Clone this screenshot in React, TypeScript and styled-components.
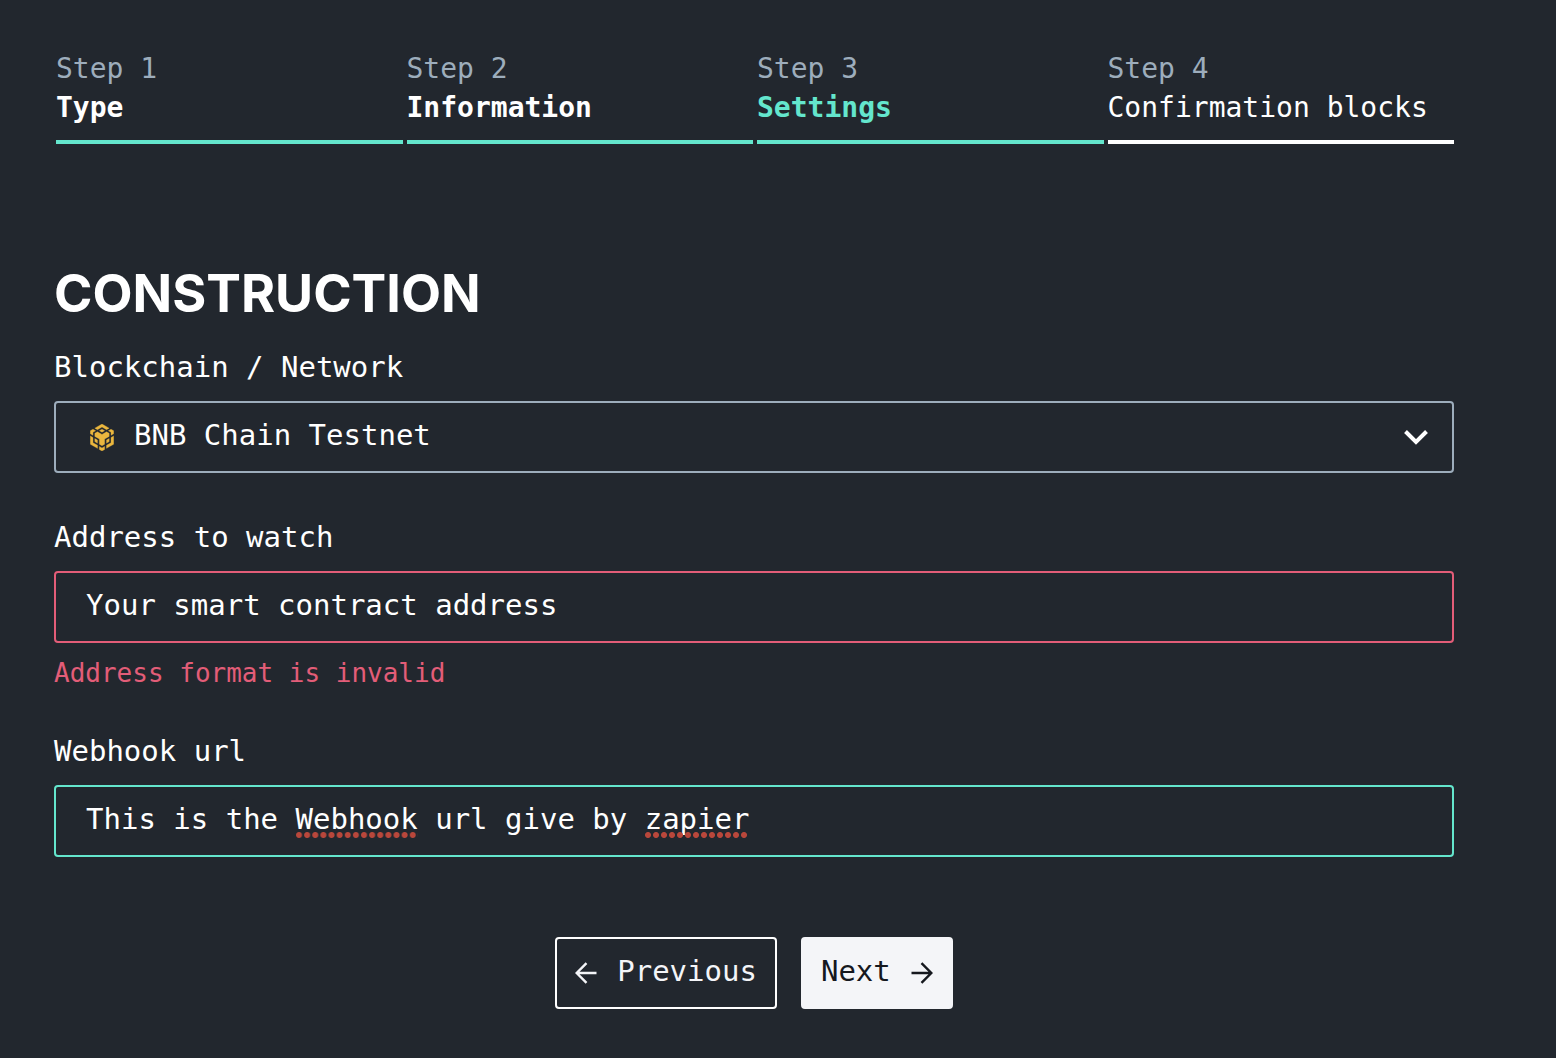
import React, { useId, useState } from "react";
import styled, { createGlobalStyle } from "styled-components";

const colors = {
  background: "#22272e",
  mint: "#64e6cd",
  slate: "#9dadbc",
  rose: "#e35d78",
  white: "#ffffff",
  light: "#f4f5f8",
  ink: "#15181e",
  gold: "#ebb73e",
  spelling: "#b9473b",
};

const mono = `"DejaVu Sans Mono", "Liberation Mono", monospace`;

const GlobalStyle = createGlobalStyle`
  * { box-sizing: border-box; }
  body {
    margin: 0;
    background: ${colors.background};
    color: ${colors.white};
    font-family: ${mono};
  }
`;

const Page = styled.main`
  padding: 49px 102px 48px 54px;
`;

const Stepper = styled.ol`
  display: grid;
  grid-template-columns: repeat(4, 1fr);
  gap: 4px;
  margin: 0;
  padding: 0 0 0 2px;
  list-style: none;
  font-size: 28px;
  line-height: 39px;
`;

type StepState = "done" | "current" | "upcoming";

const StepItem = styled.li<{ $state: StepState }>`
  display: flex;
  flex-direction: column;
  padding-bottom: 13px;
  white-space: nowrap;
  border-bottom: 4px solid
    ${(p) => (p.$state === "upcoming" ? colors.white : colors.mint)};
`;

const StepNumber = styled.span`
  color: ${colors.slate};
`;

const StepName = styled.span<{ $state: StepState }>`
  color: ${(p) => (p.$state === "current" ? colors.mint : colors.white)};
  font-weight: ${(p) => (p.$state === "upcoming" ? 400 : 700)};
`;

const Title = styled.h1`
  margin: 120px 0 24px;
  font-family: Inter, sans-serif;
  font-size: 52px;
  line-height: 60px;
  font-weight: 700;
  text-transform: uppercase;
`;

const Form = styled.form`
  display: flex;
  flex-direction: column;
  gap: 45px;
`;

const Field = styled.div`
  display: flex;
  flex-direction: column;
`;

const Label = styled.label`
  margin-bottom: 14px;
  font-size: 29px;
  line-height: 39px;
`;

const ControlFrame = styled.div`
  position: relative;
  font-size: 29px;
`;

const TextInput = styled.input<{ $tone: string }>`
  display: block;
  width: 100%;
  height: 72px;
  padding: 0 30px 4px;
  border: 2px solid ${(p) => p.$tone};
  border-radius: 4px;
  outline: none;
  background: transparent;
  color: ${colors.white};
  font: 400 29px ${mono};
`;

const Select = styled.select`
  display: block;
  width: 100%;
  height: 72px;
  padding: 0 78px 4px;
  border: 2px solid ${colors.slate};
  border-radius: 4px;
  outline: none;
  appearance: none;
  background: transparent;
  color: ${colors.white};
  font: 400 29px ${mono};

  option {
    background: ${colors.background};
  }
`;

const ControlIcon = styled.span<{ $side: "left" | "right" }>`
  position: absolute;
  top: 0;
  bottom: 0;
  ${(p) => (p.$side === "left" ? "left: 36px;" : "right: 26px;")}
  display: flex;
  align-items: center;
  pointer-events: none;
`;

const SpellingMark = styled.span<{ $start: number; $length: number }>`
  position: absolute;
  top: 47px;
  left: calc(32px + ${(p) => p.$start}ch);
  width: ${(p) => p.$length}ch;
  height: 6px;
  pointer-events: none;
  background: radial-gradient(
      circle at 3px 3px,
      ${colors.spelling} 2.5px,
      transparent 3.5px
    )
    0 0 / 8px 6px round no-repeat;
`;

const ErrorText = styled.p`
  margin: 16px 0 0;
  color: ${colors.rose};
  font-size: 26px;
  line-height: 28px;
`;

const Actions = styled.div`
  display: flex;
  justify-content: center;
  gap: 24px;
  margin-top: 35px;
`;

const Button = styled.button<{ $filled?: boolean }>`
  display: flex;
  align-items: center;
  gap: 20px;
  height: 72px;
  padding: 0 18px;
  border: 2px solid ${(p) => (p.$filled ? colors.light : colors.white)};
  border-radius: 4px;
  background: ${(p) => (p.$filled ? colors.light : "transparent")};
  color: ${(p) => (p.$filled ? colors.ink : colors.light)};
  font: 400 29px ${mono};
  cursor: pointer;
`;

const ButtonText = styled.span`
  padding-bottom: 4px;
`;

function BnbIcon() {
  return (
    <svg width="24" height="27" viewBox="1.5 0 21 24" fill={colors.gold} stroke={colors.gold} strokeWidth="0.3" aria-hidden="true">
      <path d="M5.63 3.68 12 0l6.37 3.68-2.34 1.35L12 2.72 7.97 5.03Z" />
      <path d="m18.37 8.31-2.34-1.36L12 9.27 7.97 6.95 5.63 8.31v2.72l4.03 2.32v4.63L12 19.34l2.34-1.36v-4.63l4.03-2.32Z" />
      <path d="M12 4.6 14.3 5.95 12 7.3 9.7 5.95Z" />
      <path d="M18.37 15.66v-2.71l-2.34 1.35v2.72Z" />
      <path d="M5.63 15.66v-2.71l2.34 1.35v2.72Z" />
      <path d="m20.03 16.62-4.03 2.32v2.72l6.37-3.68v-7.35l-2.34 1.36Z" />
      <path d="M3.97 16.62 8 18.94v2.72l-6.37-3.68v-7.35l2.34 1.36Z" />
      <path d="m17.69 5.99 2.34 1.36v2.72l2.34-1.36V5.99l-2.34-1.35Z" />
      <path d="M6.31 5.99 3.97 7.35v2.72L1.63 8.71V5.99l2.34-1.35Z" />
      <path d="M9.66 19.93v2.71L12 24l2.34-1.36v-2.71L12 21.28Z" />
    </svg>
  );
}

function ChevronIcon() {
  return (
    <svg width="24" height="16" viewBox="0 0 24 16" fill="none" stroke={colors.white} strokeWidth="4" aria-hidden="true">
      <path d="M1.5 2.5 12 13l10.5-10.5" />
    </svg>
  );
}

function ArrowIcon({ direction }: { direction: "left" | "right" }) {
  return (
    <svg width="22" height="22" viewBox="0 0 22 22" fill="none" stroke="currentColor" strokeWidth="2.4" aria-hidden="true">
      {direction === "left" ? (
        <path d="M21.5 11H2M11.5 1.2 1.7 11l9.8 9.8" />
      ) : (
        <path d="M.5 11H20M10.5 1.2l9.8 9.8-9.8 9.8" />
      )}
    </svg>
  );
}

const steps: { name: string; state: StepState }[] = [
  { name: "Type", state: "done" },
  { name: "Information", state: "done" },
  { name: "Settings", state: "current" },
  { name: "Confirmation blocks", state: "upcoming" },
];

const WEBHOOK_TEXT = "This is the Webhook url give by zapier";
const unknownWords = ["Webhook", "zapier"];

export default function App() {
  const id = useId();
  const [address, setAddress] = useState("Your smart contract address");
  const [webhook, setWebhook] = useState(WEBHOOK_TEXT);

  return (
    <>
      <GlobalStyle />
      <Page>
        <Stepper>
          {steps.map((step, index) => (
            <StepItem
              key={step.name}
              $state={step.state}
              aria-current={step.state === "current" ? "step" : undefined}
            >
              <StepNumber>Step {index + 1}</StepNumber>
              <StepName $state={step.state}>{step.name}</StepName>
            </StepItem>
          ))}
        </Stepper>

        <Title>Construction</Title>

        <Form onSubmit={(event) => event.preventDefault()}>
          <Field>
            <Label htmlFor={`${id}-network`}>Blockchain / Network</Label>
            <ControlFrame>
              <Select id={`${id}-network`} defaultValue="bnb-testnet">
                <option value="bnb-testnet">BNB Chain Testnet</option>
              </Select>
              <ControlIcon $side="left">
                <BnbIcon />
              </ControlIcon>
              <ControlIcon $side="right">
                <ChevronIcon />
              </ControlIcon>
            </ControlFrame>
          </Field>

          <Field>
            <Label htmlFor={`${id}-address`}>Address to watch</Label>
            <TextInput
              id={`${id}-address`}
              $tone={colors.rose}
              value={address}
              onChange={(event) => setAddress(event.target.value)}
              aria-invalid="true"
              aria-describedby={`${id}-address-error`}
            />
            <ErrorText id={`${id}-address-error`}>Address format is invalid</ErrorText>
          </Field>

          <Field>
            <Label htmlFor={`${id}-webhook`}>Webhook url</Label>
            <ControlFrame>
              <TextInput
                id={`${id}-webhook`}
                $tone={colors.mint}
                value={webhook}
                spellCheck={false}
                onChange={(event) => setWebhook(event.target.value)}
              />
              {unknownWords
                .filter((word) => webhook.includes(word))
                .map((word) => (
                  <SpellingMark
                    key={word}
                    $start={webhook.indexOf(word)}
                    $length={word.length}
                  />
                ))}
            </ControlFrame>
          </Field>

          <Actions>
            <Button type="button">
              <ArrowIcon direction="left" />
              <ButtonText>Previous</ButtonText>
            </Button>
            <Button type="submit" $filled>
              <ButtonText>Next</ButtonText>
              <ArrowIcon direction="right" />
            </Button>
          </Actions>
        </Form>
      </Page>
    </>
  );
}
